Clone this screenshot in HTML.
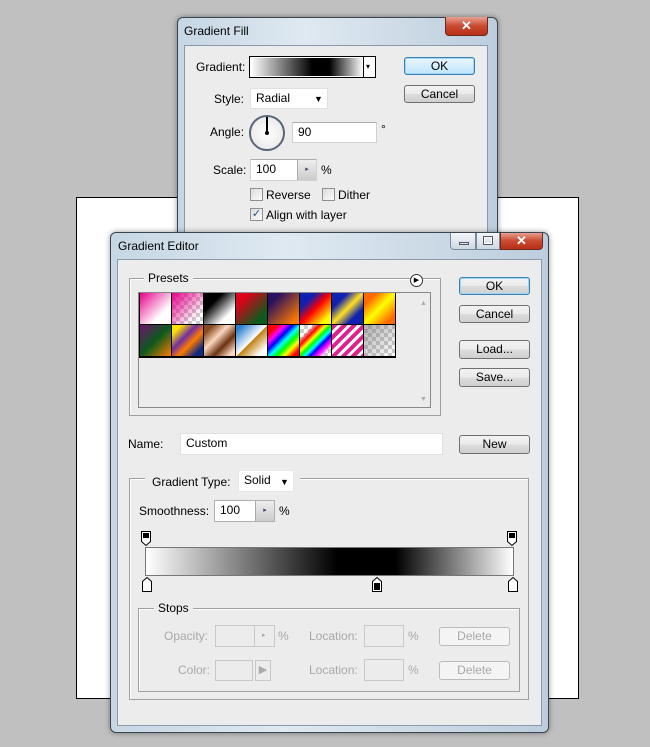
<!DOCTYPE html><html><head><style>
*{box-sizing:border-box;margin:0;padding:0}
body{width:650px;height:747px;background:#c0c0c0;position:relative;overflow:hidden;font-family:"Liberation Sans",sans-serif;font-size:12px;color:#000}
.a{position:absolute}
.t{position:absolute;white-space:nowrap;line-height:14px}
.btn{position:absolute;border:1px solid #707070;border-radius:3px;background:linear-gradient(#f2f2f2 0,#ebebeb 50%,#dddddd 51%,#cfcfcf);text-align:center;line-height:16px}
.inp{position:absolute;background:#fff;border:1px solid #d0d0d0;border-top-color:#abadb3;padding-left:5px;line-height:19px}
.grp{position:absolute;border:1px solid #a0a0a0;box-shadow:1px 1px 0 #fff inset}
.win{position:absolute;background:linear-gradient(90deg,#c6d6e4,#dfe9f1 40%,#bccddd);border:1px solid #3a4550;border-radius:6px 6px 0 0;box-shadow:0 0 6px rgba(0,0,0,.4)}
.cli{position:absolute;background:#ececec;border:1px solid #8a9aab}
.cb{position:absolute;width:13px;height:13px;border:1px solid #8f8f8f;background:linear-gradient(135deg,#ddd,#fbfbfb)}
.dis{color:#a8a8a8}
.sw{position:absolute;width:32px;height:32px;border-right:1px solid #000;border-bottom:1px solid #000}
.chk{background-color:#fff;background-image:linear-gradient(45deg,#ccc 25%,transparent 25%,transparent 75%,#ccc 75%),linear-gradient(45deg,#ccc 25%,transparent 25%,transparent 75%,#ccc 75%);background-size:8px 8px;background-position:0 0,4px 4px}
</style></head><body>
<div class="a" style="left:76px;top:197px;width:503px;height:502px;background:#fff;border:1px solid #000"></div>

<!-- Gradient Fill -->
<div class="win" style="left:177px;top:17px;width:321px;height:240px"></div>
<div class="a" style="left:445px;top:17px;width:43px;height:19px;border:1px solid #6b2a1c;border-top:none;border-radius:0 0 4px 4px;background:linear-gradient(#e8a090,#c94a30 50%,#b83018);color:#fff;font-weight:bold;text-align:center;font-size:13px;line-height:17px">✕</div>
<div class="t" style="left:184px;top:24px">Gradient Fill</div>
<div class="cli" style="left:184px;top:45px;width:304px;height:200px"></div>
<div class="t" style="left:196px;top:60px">Gradient:</div>
<div class="a" style="left:249px;top:56px;width:127px;height:22px;border:1px solid #000;background:#fff"></div>
<div class="a" style="left:251px;top:58px;width:112px;height:18px;background:linear-gradient(90deg,#fff,#000 55%,#000 70%,#fff)"></div>
<div class="a" style="left:363px;top:57px;width:1px;height:20px;background:#000"></div>
<div class="t" style="left:366px;top:60px;font-size:8px">▾</div>
<div class="btn" style="left:404px;top:57px;width:71px;height:18px;border-color:#3c7fb1;background:linear-gradient(#eaf6fd,#bee6fd);box-shadow:0 0 0 1px #9ed6f5 inset">OK</div>
<div class="btn" style="left:404px;top:85px;width:71px;height:18px">Cancel</div>
<div class="t" style="left:214px;top:92px">Style:</div>
<div class="inp" style="left:250px;top:88px;width:78px;height:21px;border-color:#e0e0e0">Radial</div>
<div class="t" style="left:314px;top:92px;font-size:9px">▼</div>
<div class="t" style="left:210px;top:125px">Angle:</div>
<div class="a" style="left:249px;top:115px;width:36px;height:36px;border:2px solid #5a6478;border-radius:50%;background:radial-gradient(#fff,#e4e4e4)"></div>
<div class="a" style="left:266px;top:117px;width:2px;height:16px;background:#000"></div>
<div class="a" style="left:265px;top:131px;width:4px;height:4px;background:#000;border-radius:50%"></div>
<div class="inp" style="left:292px;top:122px;width:85px;height:21px">90</div>
<div class="t" style="left:381px;top:122px">°</div>
<div class="t" style="left:213px;top:163px">Scale:</div>
<div class="inp" style="left:250px;top:159px;width:67px;height:22px">100</div>
<div class="a" style="left:297px;top:160px;width:19px;height:20px;background:linear-gradient(#eee,#ccc);border-left:1px solid #aaa;font-size:7px;color:#446;text-align:center;line-height:20px">▸</div>
<div class="t" style="left:321px;top:163px">%</div>
<div class="cb" style="left:250px;top:188px"></div><div class="t" style="left:266px;top:188px">Reverse</div>
<div class="cb" style="left:322px;top:188px"></div><div class="t" style="left:338px;top:188px">Dither</div>
<div class="cb" style="left:250px;top:208px;font-size:11px;line-height:11px;color:#2a4a8a;text-align:center">✓</div><div class="t" style="left:266px;top:208px">Align with layer</div>

<!-- Gradient Editor -->
<div class="win" style="left:110px;top:232px;width:439px;height:501px;border-radius:6px"></div>
<div class="t" style="left:118px;top:239px">Gradient Editor</div>
<div class="a" style="left:450px;top:233px;width:26px;height:17px;border:1px solid #7a8a9a;border-top:none;border-radius:0 0 0 4px;background:linear-gradient(#f4f7fa,#cdd8e2)"><div class="a" style="left:8px;top:9px;width:10px;height:3px;border:1px solid #556"></div></div>
<div class="a" style="left:476px;top:233px;width:24px;height:17px;border:1px solid #7a8a9a;border-top:none;background:linear-gradient(#f4f7fa,#cdd8e2)"><div class="a" style="left:6px;top:3px;width:10px;height:9px;border:1px solid #556;box-shadow:0 0 0 1px #fff inset"></div></div>
<div class="a" style="left:500px;top:233px;width:43px;height:17px;border:1px solid #6b2a1c;border-top:none;border-radius:0 0 4px 0;background:linear-gradient(#e8a090,#c94a30 50%,#b83018);color:#fff;font-weight:bold;text-align:center;font-size:13px;line-height:16px">✕</div>
<div class="cli" style="left:117px;top:259px;width:425px;height:467px"></div>

<div class="grp" style="left:129px;top:278px;width:312px;height:138px"></div>
<div class="t" style="left:144px;top:271px;background:#ececec;padding:0 4px">Presets</div>
<div class="a" style="left:410px;top:274px;width:13px;height:13px;border:1px solid #333;border-radius:50%;background:#fff;font-size:7px;line-height:11px;text-align:center">▶</div>
<div class="a" style="left:138px;top:292px;width:293px;height:116px;border:1px solid #888;background:#ececec"></div>
<div class="t" style="left:420px;top:297px;font-size:7px;color:#aaa">▲</div>
<div class="t" style="left:420px;top:393px;font-size:7px;color:#aaa">▼</div>
<div class="a" style="left:139px;top:293px;width:257px;height:65px;background:#000"></div>
<div class="sw" style="left:140px;top:293px;background:linear-gradient(135deg,#e8008c,#fff 70%)"></div>
<div class="sw chk" style="left:172px;top:293px"><div style="width:100%;height:100%;background:linear-gradient(135deg,#e8008c,transparent 80%)"></div></div>
<div class="sw" style="left:204px;top:293px;background:linear-gradient(135deg,#000 30%,#fff 75%)"></div>
<div class="sw" style="left:236px;top:293px;background:linear-gradient(135deg,#e0001a 20%,#0c5a1c 80%)"></div>
<div class="sw" style="left:268px;top:293px;background:linear-gradient(135deg,#2a1060 20%,#ff7a00 90%)"></div>
<div class="sw" style="left:300px;top:293px;background:linear-gradient(135deg,#1020b0 25%,#f00 50%,#ff0 85%)"></div>
<div class="sw" style="left:332px;top:293px;background:linear-gradient(135deg,#1020b0 25%,#ffe020 50%,#1020b0 75%)"></div>
<div class="sw" style="left:364px;top:293px;background:linear-gradient(135deg,#ff6a00 20%,#ff0 50%,#ff6a00 85%)"></div>
<div class="sw" style="left:140px;top:325px;background:linear-gradient(135deg,#701070,#0c5a1c 50%,#ff7a00)"></div>
<div class="sw" style="left:172px;top:325px;background:linear-gradient(135deg,#ffe000 15%,#7030a0 40%,#ff7a00 60%,#102a80 85%)"></div>
<div class="sw" style="left:204px;top:325px;background:linear-gradient(135deg,#8a4a20 15%,#fcd8c0 40%,#6a3010 65%,#fcd8c0 90%)"></div>
<div class="sw" style="left:236px;top:325px;background:linear-gradient(135deg,#2a80d0 10%,#fff 50%,#c08010 52%,#fff 85%)"></div>
<div class="sw" style="left:268px;top:325px;background:linear-gradient(135deg,#f00 15%,#f0f 28%,#00f 40%,#0ff 52%,#0f0 64%,#ff0 76%,#f00 90%)"></div>
<div class="sw chk" style="left:300px;top:325px"><div style="width:100%;height:100%;background:linear-gradient(135deg,transparent 20%,#f00 32%,#ff0 42%,#0f0 50%,#0ff 58%,#00f 66%,#f0f 76%,transparent 88%)"></div></div>
<div class="sw" style="left:332px;top:325px;background:repeating-linear-gradient(135deg,#e0208c 0 4px,#fff 4px 7px)"></div>
<div class="sw chk" style="left:364px;top:325px"><div style="width:100%;height:100%;background:linear-gradient(135deg,rgba(120,120,120,.6),transparent)"></div></div>

<div class="btn" style="left:459px;top:277px;width:71px;height:18px;border-color:#3c7fb1;box-shadow:0 0 0 1px #9ed6f5 inset">OK</div>
<div class="btn" style="left:459px;top:305px;width:71px;height:18px">Cancel</div>
<div class="btn" style="left:459px;top:340px;width:71px;height:19px">Load...</div>
<div class="btn" style="left:459px;top:368px;width:71px;height:19px">Save...</div>

<div class="t" style="left:128px;top:437px">Name:</div>
<div class="inp" style="left:180px;top:433px;width:263px;height:22px;border-color:#e0e0e0">Custom</div>
<div class="btn" style="left:459px;top:435px;width:71px;height:19px">New</div>

<div class="grp" style="left:129px;top:478px;width:400px;height:222px"></div>
<div class="a" style="left:145px;top:472px;width:155px;height:20px;background:#ececec"></div>
<div class="t" style="left:152px;top:475px">Gradient Type:</div>
<div class="inp" style="left:238px;top:470px;width:56px;height:22px;border-color:#e8e8e8">Solid</div>
<div class="t" style="left:280px;top:475px;font-size:9px">▼</div>
<div class="t" style="left:139px;top:504px">Smoothness:</div>
<div class="inp" style="left:214px;top:500px;width:61px;height:22px;border-color:#b0b0b0">100</div>
<div class="a" style="left:255px;top:501px;width:19px;height:20px;background:linear-gradient(#eee,#ccc);border-left:1px solid #aaa;font-size:7px;color:#446;text-align:center;line-height:20px">▸</div>
<div class="t" style="left:279px;top:504px">%</div>

<svg class="a" style="left:138px;top:528px" width="390" height="68">
<g stroke="#000" stroke-width="1" fill="#fff">
<path d="M3.5 3.5h9v10l-4.5 4l-4.5-4z"/><rect x="5" y="5" width="6" height="5" fill="#000" stroke="none"/>
<path d="M369.5 3.5h9v10l-4.5 4l-4.5-4z"/><rect x="371" y="5" width="6" height="5" fill="#000" stroke="none"/>
<path d="M4.5 63.5h9v-10l-4.5-4l-4.5 4z"/>
<path d="M234.5 63.5h9v-10l-4.5-4l-4.5 4z"/><rect x="236" y="55" width="6" height="7" fill="#000" stroke="none"/>
<path d="M370.5 63.5h9v-10l-4.5-4l-4.5 4z"/>
</g></svg>
<div class="a" style="left:145px;top:547px;width:369px;height:29px;border:1px solid #777;background:linear-gradient(90deg,#fff,#000 52%,#000 68%,#fff)"></div>

<div class="grp" style="left:138px;top:608px;width:382px;height:84px"></div>
<div class="t" style="left:154px;top:601px;background:#ececec;padding:0 4px">Stops</div>
<div class="t dis" style="left:164px;top:629px">Opacity:</div>
<div class="a" style="left:215px;top:625px;width:60px;height:22px;border:1px solid #c8c8c8"></div>
<div class="a" style="left:254px;top:626px;width:1px;height:20px;background:#c8c8c8"></div>
<div class="t dis" style="left:262px;top:629px;font-size:7px">▸</div>
<div class="t dis" style="left:278px;top:629px">%</div>
<div class="t dis" style="left:309px;top:629px">Location:</div>
<div class="a" style="left:364px;top:625px;width:40px;height:22px;border:1px solid #c8c8c8"></div>
<div class="t dis" style="left:408px;top:629px">%</div>
<div class="btn dis" style="left:439px;top:627px;width:71px;height:19px;border-color:#bbb;background:#f4f4f4">Delete</div>
<div class="t dis" style="left:178px;top:663px">Color:</div>
<div class="a" style="left:215px;top:660px;width:38px;height:21px;border:1px solid #c8c8c8"></div>
<div class="a" style="left:255px;top:660px;width:16px;height:21px;border:1px solid #c8c8c8;color:#aaa;font-size:11px;text-align:center;line-height:19px">▶</div>
<div class="t dis" style="left:309px;top:663px">Location:</div>
<div class="a" style="left:364px;top:659px;width:40px;height:22px;border:1px solid #c8c8c8"></div>
<div class="t dis" style="left:408px;top:663px">%</div>
<div class="btn dis" style="left:439px;top:661px;width:71px;height:19px;border-color:#bbb;background:#f4f4f4">Delete</div>
</body></html>
